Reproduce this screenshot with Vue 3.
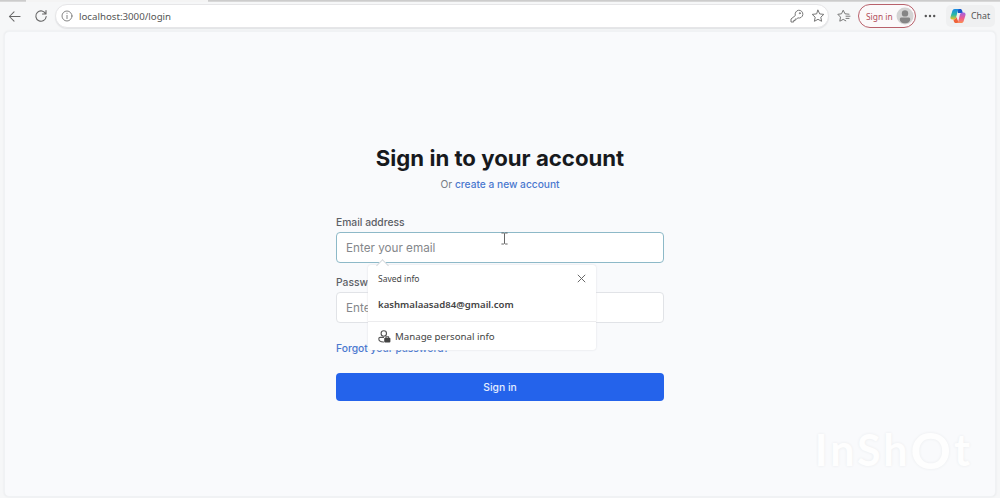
<script setup>
import { ref } from "vue";

const email = ref("");
const password = ref("");
const showSaved = ref(true);
</script>

<template>
  <div class="browser">
    <div class="tab-strip"><span class="active-tab"></span></div>
    <header class="toolbar">
      <svg class="back" viewBox="0 0 14 14"><path d="M13 7H1.5M6.5 2 1.5 7l5 5" /></svg>
      <svg class="reload" viewBox="0 0 14 14"><path d="M11.8 5A5.2 5.2 0 1 0 12.2 7.5M12 1.5V5H8.5" /></svg>
      <div class="address">
        <svg class="info" viewBox="0 0 12 12"><circle cx="6" cy="6" r="5" /><path d="M6 5.4v3.2M6 3.2v.2" /></svg>
        <span class="url">localhost:3000/login</span>
        <svg class="key" viewBox="0 0 14 14"><path d="M5.2 6.2a3.9 3.9 0 1 1 2.7 2.7L6.7 10H5.2v1.5H3.7V13H1v-2.6z" /><circle cx="9.8" cy="4.2" r=".5" /></svg>
        <svg class="star" viewBox="0 0 14 14"><path d="m7 1.2 1.7 3.7 4.1.5-3 2.8.8 4.1L7 10.3l-3.6 2 .8-4.1-3-2.8 4.1-.5z" /></svg>
      </div>
      <svg class="favorites" viewBox="0 0 14 14"><path d="M12 5.2 8 4.8 6.2 1.2 4.5 4.8l-3.7.5 2.7 2.8-.7 4.1 3.4-1.8 2.6 1.4M9 7.2h4M9 9.4h3" /></svg>
      <button class="profile">
        <span>Sign in</span>
        <svg viewBox="0 0 18 18"><circle class="disc" cx="9" cy="9" r="8.5" /><circle cx="9" cy="6.4" r="3.2" /><path d="M3.8 12.2c0-1 .7-1.6 1.7-1.6h7c1 0 1.7.6 1.7 1.6 0 2.4-2.2 4.1-5.2 4.1s-5.2-1.7-5.2-4.1z" /></svg>
      </button>
      <svg class="more" viewBox="0 0 12 4"><circle cx="1.8" cy="2" r="1.2" /><circle cx="6" cy="2" r="1.2" /><circle cx="10.2" cy="2" r="1.2" /></svg>
      <button class="chat">
        <svg viewBox="0 0 18 18">
          <defs>
            <linearGradient id="cool" x1="0" y1="0" x2="0" y2="1">
              <stop offset="0" stop-color="#1689e8" />
              <stop offset=".55" stop-color="#28b9a5" />
              <stop offset="1" stop-color="#f2c51c" />
            </linearGradient>
            <linearGradient id="warm" x1="0" y1="0" x2="0" y2="1">
              <stop offset="0" stop-color="#9d62e8" />
              <stop offset=".55" stop-color="#f05a8e" />
              <stop offset="1" stop-color="#fa9150" />
            </linearGradient>
          </defs>
          <path fill="#1855c8" d="M8 1h3.6c1.1 0 1.7.7 2 1.7l.8 2.8H9z" />
          <path fill="url(#cool)" d="M5.4 1h5c-1 .4-1.4 1.4-1.8 2.7L7 10c-.5 1.9-1.2 3-3 3H2.6C.7 13 .1 11.4.7 9.5l1.9-6C3.1 2 3.9 1 5.4 1z" />
          <path fill="#ef6239" d="M10 17H6.4c-1.1 0-1.7-.7-2-1.7L3.8 13c2 0 2.7-1.1 3.3-2.9z" />
          <path fill="url(#warm)" d="M12.6 17h-5c1-.4 1.4-1.4 1.8-2.7L11 8c.5-1.9 1.2-3 3-3h1.4c1.9 0 2.5 1.6 1.9 3.5l-1.9 6c-.5 1.5-1.3 2.5-2.8 2.5z" />
        </svg>
        <span>Chat</span>
      </button>
    </header>

    <main class="page">
      <div class="login">
        <h1>Sign in to your account</h1>
        <p class="subtitle">Or <a href="#">create a new account</a></p>
        <form @submit.prevent>
          <label for="email">Email address</label>
          <div class="field">
            <input id="email" v-model="email" class="focused" type="email" placeholder="Enter your email" />
            <div v-if="showSaved" class="saved">
              <div class="saved-head">
                <span>Saved info</span>
                <svg viewBox="0 0 10 10" @click="showSaved = false"><path d="m1.2 1.2 7.6 7.6M8.8 1.2 1.2 8.8" /></svg>
              </div>
              <div class="saved-email">kashmalaasad84@gmail.com</div>
              <div class="manage">
                <svg viewBox="0 0 13 13">
                  <circle cx="5.8" cy="3.5" r="2.7" />
                  <path d="M5.5 7.4H2.2C1.2 7.4.8 8 .8 8.8c0 2 1.8 3.2 4.7 3.2" />
                  <rect x="6.2" y="7.7" width="6.2" height="4.8" rx="1" />
                  <path d="M8 7.6v-.9h2.6v.9" />
                </svg>
                <span>Manage personal info</span>
              </div>
            </div>
            <svg class="cursor" viewBox="0 0 7 13"><path d="M.8 1h1.7l1 .8 1-.8h1.7M3.5 1.8v9.4M.8 12h1.7l1-.8 1 .8h1.7" /></svg>
          </div>
          <label for="password">Password</label>
          <div class="field">
            <input id="password" v-model="password" type="password" placeholder="Enter your password" />
          </div>
          <a class="forgot" href="#">Forgot your password?</a>
          <button class="submit">Sign in</button>
        </form>
      </div>
      <div class="watermark">InSh<span>O</span>t</div>
    </main>
  </div>
</template>

<style>
body {
  margin: 0;
  overflow: hidden;
}
</style>

<style scoped>
* {
  box-sizing: border-box;
}

.browser {
  display: flex;
  flex-direction: column;
  width: 1000px;
  height: 498px;
  background: #f6f7f8;
  font-family: Inter, "Liberation Sans", sans-serif;
}

svg {
  flex: none;
  fill: none;
  stroke: #666;
  stroke-width: 1.1;
  stroke-linecap: round;
  stroke-linejoin: round;
}

button {
  border: 0;
  padding: 0;
  font-family: inherit;
}

a {
  color: #4a78cf;
  text-decoration: none;
}

.tab-strip {
  height: 2px;
  background: linear-gradient(#c6c6c6, #dedede);
}

.active-tab {
  display: block;
  width: 182px;
  height: 2px;
  margin-left: 26px;
  background: #f4f4f4;
}

.toolbar {
  display: flex;
  align-items: center;
  height: 29px;
  padding: 0 4px 1px 8px;
  font-family: "Noto Sans", "Open Sans", sans-serif;
}

.back {
  width: 13px;
  height: 13px;
}

.reload {
  width: 14px;
  height: 14px;
  margin-left: 13px;
}

.address {
  display: flex;
  align-items: center;
  width: 774px;
  height: 24px;
  margin-left: 7px;
  padding: 0 3px 0 5px;
  border: 1px solid #e6e6e8;
  border-radius: 12px;
  background: #fff;
  box-shadow: 0 1px 1px #e2e3e5;
}

.info {
  width: 12px;
  height: 12px;
  stroke: #777;
  stroke-width: 0.9;
}

.url {
  flex: 1;
  margin-left: 6px;
  color: #555;
  font-size: 9.7px;
}

.key,
.star,
.favorites {
  width: 14px;
  height: 14px;
  stroke: #777;
  stroke-width: 1;
}

.star {
  margin-left: 7px;
}

.favorites {
  margin-left: 8px;
}

.profile {
  display: flex;
  align-items: center;
  justify-content: space-between;
  width: 58px;
  height: 24px;
  margin-left: 7px;
  padding: 0 1px 0 7px;
  border: 1px solid #b8616b;
  border-radius: 12px;
  background: #fbf9fa;
  color: #b14d59;
  font-size: 8.4px;
}

.profile svg {
  width: 18px;
  height: 18px;
  fill: #858585;
  stroke: none;
}

.profile .disc {
  fill: #d3d3d3;
}

.more {
  width: 12px;
  height: 4px;
  margin-left: 8px;
  fill: #555;
  stroke: none;
}

.chat {
  display: flex;
  align-items: center;
  gap: 5px;
  width: 49px;
  height: 22px;
  margin-left: 10px;
  padding-left: 4px;
  border-radius: 5px;
  background: #eff0f1;
  color: #555;
  font-size: 8.8px;
}

.chat svg {
  width: 16px;
  height: 16px;
  stroke: none;
}

.page {
  position: relative;
  display: flex;
  justify-content: center;
  height: 466px;
  margin: 0 4px 1px;
  border: 1px solid #f0f2f4;
  border-radius: 5px;
  background: #f9fafc;
  box-shadow: 0 0 2px #e4e5e7;
}

.login {
  width: 328px;
  padding-top: 112px;
}

h1 {
  margin: 0 -10px;
  color: #17191d;
  font-size: 22.2px;
  font-weight: 700;
  line-height: 27px;
  text-align: center;
  white-space: nowrap;
}

.subtitle {
  margin: 5px 0 22px;
  color: #777c85;
  font-size: 10.2px;
  line-height: 16px;
  text-align: center;
}

.subtitle a {
  font-weight: 500;
}

form {
  display: flex;
  flex-direction: column;
}

label {
  height: 18px;
  padding-top: 1px;
  color: #5c6066;
  font-size: 10.3px;
  font-weight: 500;
  line-height: 15px;
}

.field {
  position: relative;
  height: 31px;
  margin-bottom: 11px;
}

input {
  display: block;
  width: 100%;
  height: 31px;
  padding: 0 9px;
  border: 1px solid #e1e3e7;
  border-radius: 4px;
  outline: none;
  background: #fff;
  color: #333;
  font-family: inherit;
  font-size: 11.7px;
}

input::placeholder {
  color: #85878b;
}

input.focused {
  border-color: #8db9c8;
}

.saved {
  position: absolute;
  z-index: 1;
  top: 33px;
  left: 32px;
  width: 228px;
  height: 85px;
  border-radius: 3px;
  background: #fff;
  box-shadow: 0 0 2px #d8dade;
  color: #444;
  font-family: "Noto Sans", "Open Sans", sans-serif;
}

.saved::before {
  position: absolute;
  top: -4px;
  left: 10px;
  width: 8px;
  height: 8px;
  border-top: 1px solid #d2d7db;
  border-left: 1px solid #d2d7db;
  background: #fff;
  content: "";
  transform: rotate(45deg);
}

.saved-head {
  display: flex;
  align-items: center;
  justify-content: space-between;
  height: 27px;
  padding: 0 10px;
  font-size: 8.5px;
}

.saved-head svg {
  width: 9px;
  height: 9px;
}

.saved-email {
  height: 30px;
  padding-left: 10px;
  border-bottom: 1px solid #ececee;
  font-size: 9.6px;
  font-weight: 600;
  line-height: 25px;
}

.manage {
  display: flex;
  align-items: center;
  gap: 4px;
  height: 29px;
  padding-left: 10px;
  font-size: 9.7px;
}

.manage svg {
  width: 13px;
  height: 13px;
  stroke: #555;
}

.manage rect {
  fill: #444;
  stroke: none;
}

.cursor {
  position: absolute;
  top: 0;
  left: 165px;
  width: 7px;
  height: 13px;
  stroke: #555;
  stroke-width: 0.9;
}

.forgot {
  height: 16px;
  margin: 6px 0 17px;
  font-size: 10.3px;
  font-weight: 500;
  line-height: 16px;
}

.submit {
  height: 28px;
  border-radius: 4px;
  background: #2463eb;
  color: #e6eeff;
  font-size: 10.3px;
  font-weight: 500;
}

.watermark {
  position: absolute;
  right: 22px;
  bottom: 18px;
  display: flex;
  align-items: center;
  color: #fefefe;
  font-family: Lato, sans-serif;
  font-size: 43px;
  font-weight: 700;
  line-height: 56px;
  letter-spacing: 3px;
  text-shadow: 0 0 3px #e9ebed;
}

.watermark span {
  font-size: 50px;
}
</style>
